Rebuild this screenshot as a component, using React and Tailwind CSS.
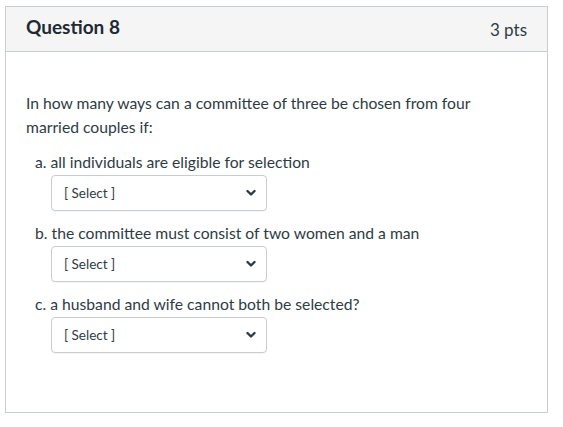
import React from 'react';

const Chevron = () => (
    <svg width="10" height="8" viewBox="0 0 10 8" className="text-[#2d3b45]">
        <path d="M1.5 2 L5 5.5 L8.5 2" fill="none" stroke="currentColor" strokeWidth="2.4" strokeLinecap="round" strokeLinejoin="round" />
    </svg>
);

const SelectBox = () => (
    <div className="ml-[25px] mt-[1px] w-[216px] h-[36px] border border-[#c7cdd1] rounded-[4px] bg-white flex items-center justify-between pl-[12px] pr-[10px] shadow-[0_1px_1px_rgba(0,0,0,0.04)]">
        <span className="text-[13.5px] text-[#2d3b45]">[ Select ]</span>
        <Chevron />
    </div>
);

const parts = [
    'a. all individuals are eligible for selection',
    'b. the committee must consist of two women and a man',
    'c. a husband and wife cannot both be selected?',
];

export default function App() {
    return (
        <div className="w-[563px] h-[427px] bg-white pt-[6px] pl-[5px]" style={{ fontFamily: 'Lato, "Liberation Sans", sans-serif' }}>
            <div className="w-[543px] h-[407px] border border-[#c7cdd1] flex flex-col">
                {/* header */}
                <div className="h-[45px] bg-[#f5f5f5] border-b border-[#c7cdd1] flex items-center justify-between pl-[20px] pr-[20px] pb-[3px] text-[#2d3b45]">
                    <span className="text-[19px] font-bold text-[#1f2a33]">Question 8</span>
                    <span className="text-[17px] mt-[4px]">3 pts</span>
                </div>

                <div className="pl-[20px] pr-[20px] pt-[39px] text-[#2d3b45]">
                    <p className="text-[15.7px] leading-[24px] w-[470px]">
                        In how many ways can a committee of three be chosen from four married couples if:
                    </p>
                    <div className="mt-[11px] flex flex-col gap-[10px]">
                        {parts.map((p) => (
                            <div key={p}>
                                <div className="pl-[9px] text-[15.7px] leading-[24px]">{p}</div>
                                <SelectBox />
                            </div>
                        ))}
                    </div>
                </div>
            </div>
        </div>
    );
}
